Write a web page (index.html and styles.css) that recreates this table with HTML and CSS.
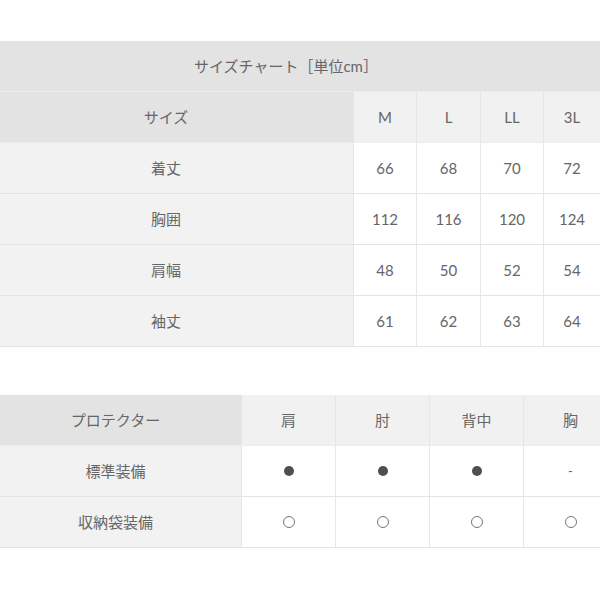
FILE: index.html
```html
<!DOCTYPE html>
<html lang="ja">
<head>
<meta charset="utf-8">
<title>サイズチャート</title>
<link rel="stylesheet" href="styles.css">
</head>
<body>
<div class="page">
  <div class="chart size-chart">
    <div class="cell title">サイズチャート［単位cm］</div>
    <div class="cell head label">サイズ</div>
    <div class="cell subhead">M</div>
    <div class="cell subhead">L</div>
    <div class="cell subhead">LL</div>
    <div class="cell subhead">3L</div>

    <div class="cell side label">着丈</div>
    <div class="cell val">66</div><div class="cell val">68</div><div class="cell val">70</div><div class="cell val">72</div>
    <div class="cell side label">胸囲</div>
    <div class="cell val">112</div><div class="cell val">116</div><div class="cell val">120</div><div class="cell val">124</div>
    <div class="cell side label">肩幅</div>
    <div class="cell val">48</div><div class="cell val">50</div><div class="cell val">52</div><div class="cell val">54</div>
    <div class="cell side label">袖丈</div>
    <div class="cell val">61</div><div class="cell val">62</div><div class="cell val">63</div><div class="cell val">64</div>
  </div>

  <div class="chart protector-chart">
    <div class="cell head label2">プロテクター</div>
    <div class="cell subhead">肩</div>
    <div class="cell subhead">肘</div>
    <div class="cell subhead">背中</div>
    <div class="cell subhead">胸</div>

    <div class="cell side label2">標準装備</div>
    <div class="cell val"><span class="dot"></span></div>
    <div class="cell val"><span class="dot"></span></div>
    <div class="cell val"><span class="dot"></span></div>
    <div class="cell val dash">-</div>
    <div class="cell side label2">収納袋装備</div>
    <div class="cell val"><span class="ring"></span></div>
    <div class="cell val"><span class="ring"></span></div>
    <div class="cell val"><span class="ring"></span></div>
    <div class="cell val"><span class="ring"></span></div>
  </div>
</div>
</body>
</html>
```
FILE: styles.css
```css
html, body {
  margin: 0;
  padding: 0;
  background: #ffffff;
  overflow: hidden;
}
body {
  font-family: Lato, "Noto Sans CJK JP", sans-serif;
  font-size: 15px;
  color: #666666;
}
.page {
  padding-top: 41px;
  width: 600px;
  overflow: hidden;
}
.chart {
  display: grid;
  grid-auto-rows: 51px;
}
.size-chart {
  grid-template-columns: 353px 63px 64px 63px 57px;
  width: 600px;
}
.protector-chart {
  grid-template-columns: 241px 94px 94px 94px 94px;
  width: 617px;
  margin-top: 48px;
}
.cell {
  box-sizing: border-box;
  border-bottom: 1px solid #e4e4e4;
  display: flex;
  align-items: center;
  justify-content: center;
  line-height: 1;
}
.title {
  grid-column: 1 / -1;
  background: #e3e3e3;
  border-bottom-color: #ececec;
  padding-right: 28px;
}
.head {
  background: #e3e3e3;
  border-bottom-color: #ececec;
}
.subhead {
  background: #f1f1f1;
  border-left: 1px solid #e6e6e6;
  border-bottom-color: #ececec;
}
.side {
  background: #f2f2f2;
}
.val {
  background: #ffffff;
  border-left: 1px solid #e6e6e6;
}
.label {
  padding-right: 21px;
}
.label2 {
  padding-right: 10px;
}
.dot {
  display: block;
  width: 10px;
  height: 10px;
  border-radius: 50%;
  background: #4f4f4f;
}
.ring {
  display: block;
  width: 12px;
  height: 12px;
  border-radius: 50%;
  box-sizing: border-box;
  border: 1px solid #777777;
}
.dash {
  font-size: 13px;
}
```
